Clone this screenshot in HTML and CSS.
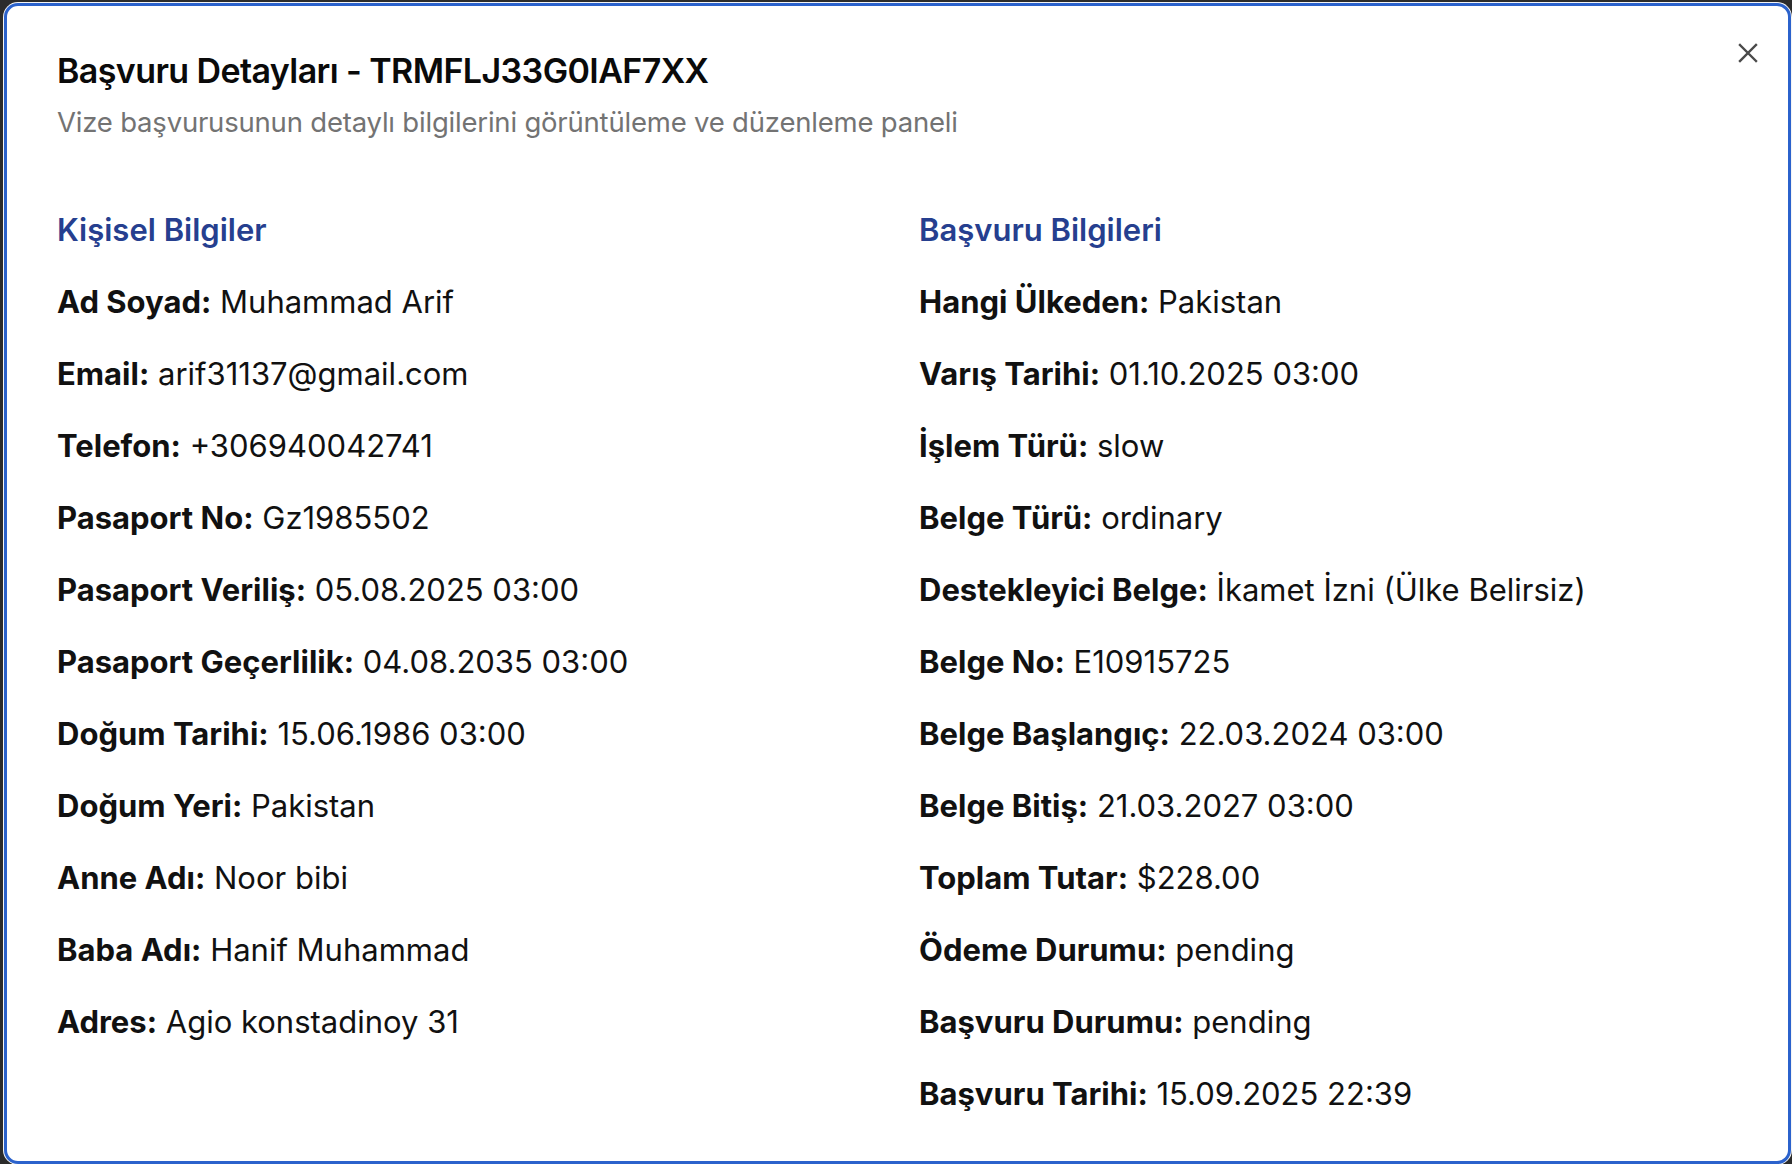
FILE: index.html
```html
<!DOCTYPE html>
<html lang="tr">
<head>
<meta charset="utf-8">
<title>Başvuru Detayları</title>
<link rel="stylesheet" href="styles.css">
</head>
<body>
<div class="dialog">
  <button class="close" aria-label="Kapat">
    <svg width="22" height="22" viewBox="0 0 22 22" fill="none" stroke="#4a4a4a" stroke-width="2.4" stroke-linecap="square"><path d="M3 3L19 19M19 3L3 19"/></svg>
  </button>
  <header class="head">
    <h1 class="title">Başvuru Detayları - TRMFLJ33G0IAF7XX</h1>
    <p class="subtitle">Vize başvurusunun detaylı bilgilerini görüntüleme ve düzenleme paneli</p>
  </header>
  <div class="grid">
    <section class="col">
      <h2 class="sec">Kişisel Bilgiler</h2>
      <div class="rows">
        <p class="row"><b>Ad Soyad:</b> Muhammad Arif</p>
        <p class="row"><b>Email:</b> arif31137@gmail.com</p>
        <p class="row"><b>Telefon:</b> +306940042741</p>
        <p class="row"><b>Pasaport No:</b> Gz1985502</p>
        <p class="row"><b>Pasaport Veriliş:</b> 05.08.2025 03:00</p>
        <p class="row"><b>Pasaport Geçerlilik:</b> 04.08.2035 03:00</p>
        <p class="row"><b>Doğum Tarihi:</b> 15.06.1986 03:00</p>
        <p class="row"><b>Doğum Yeri:</b> Pakistan</p>
        <p class="row"><b>Anne Adı:</b> Noor bibi</p>
        <p class="row"><b>Baba Adı:</b> Hanif Muhammad</p>
        <p class="row"><b>Adres:</b> Agio konstadinoy 31</p>
      </div>
    </section>
    <section class="col">
      <h2 class="sec">Başvuru Bilgileri</h2>
      <div class="rows">
        <p class="row"><b>Hangi Ülkeden:</b> Pakistan</p>
        <p class="row"><b>Varış Tarihi:</b> 01.10.2025 03:00</p>
        <p class="row"><b>İşlem Türü:</b> slow</p>
        <p class="row"><b>Belge Türü:</b> ordinary</p>
        <p class="row"><b>Destekleyici Belge:</b> İkamet İzni (Ülke Belirsiz)</p>
        <p class="row"><b>Belge No:</b> E10915725</p>
        <p class="row"><b>Belge Başlangıç:</b> 22.03.2024 03:00</p>
        <p class="row"><b>Belge Bitiş:</b> 21.03.2027 03:00</p>
        <p class="row"><b>Toplam Tutar:</b> $228.00</p>
        <p class="row"><b>Ödeme Durumu:</b> pending</p>
        <p class="row"><b>Başvuru Durumu:</b> pending</p>
        <p class="row"><b>Başvuru Tarihi:</b> 15.09.2025 22:39</p>
      </div>
    </section>
  </div>
</div>
</body>
</html>
```

FILE: styles.css
```css
* { box-sizing: border-box; }
html, body { margin: 0; padding: 0; }
body {
  background: #2b2b2b;
  width: 1792px;
  height: 1164px;
  overflow: hidden;
  font-family: Inter, "Noto Sans", sans-serif;
  color: #111;
  padding: 3px 1px 0 4px;
}
.dialog {
  position: relative;
  height: 1161px;
  background: #fff;
  border: 3px solid #2b62cc;
  border-radius: 14px;
  box-shadow: 0 0 0 1px #f4f4f4;
  padding: 43px 55px 0 50px;
}
.close {
  position: absolute;
  top: 36px;
  right: 29px;
  width: 22px;
  height: 22px;
  padding: 0;
  border: 0;
  background: none;
  display: flex;
}
.head { display: flex; flex-direction: column; gap: 9px; }
.title {
  margin: 0;
  font-size: 34px;
  line-height: 44px;
  font-weight: 600;
  letter-spacing: -0.6px;
  color: #0a0a0a;
}
.subtitle {
  margin: 0;
  font-size: 27.5px;
  line-height: 40px;
  color: #737373;
  letter-spacing: -0.2px;
}
.grid {
  display: grid;
  grid-template-columns: 1fr 1fr;
  column-gap: 48px;
  margin-top: 68px;
}
.sec {
  margin: 0 0 32px;
  font-size: 31px;
  line-height: 40px;
  font-weight: 600;
  color: #263f8f;
}
.rows { display: flex; flex-direction: column; gap: 32px; }
.row {
  margin: 0;
  font-size: 31px;
  line-height: 40px;
}
.row b { font-weight: 700; }
```
